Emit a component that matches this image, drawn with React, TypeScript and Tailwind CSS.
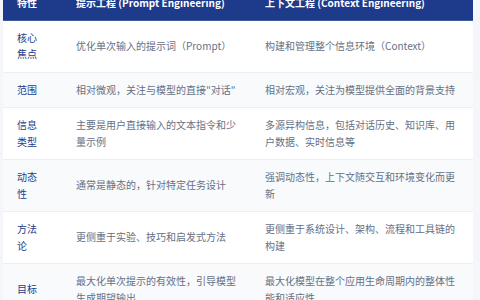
const rows: [string, string, string][] = [
  ["核心焦点", "优化单次输入的提示词（Prompt）", "构建和管理整个信息环境（Context）"],
  ["范围", "相对微观，关注与模型的直接\"对话\"", "相对宏观，关注为模型提供全面的背景支持"],
  ["信息类型", "主要是用户直接输入的文本指令和少量示例", "多源异构信息，包括对话历史、知识库、用户数据、实时信息等"],
  ["动态性", "通常是静态的，针对特定任务设计", "强调动态性，上下文随交互和环境变化而更新"],
  ["方法论", "更侧重于实验、技巧和启发式方法", "更侧重于系统设计、架构、流程和工具链的构建"],
  ["目标", "最大化单次提示的有效性，引导模型生成期望输出", "最大化模型在整个应用生命周期内的整体性能和适应性"],
];

export default function App() {
  return (
    <div
      className="h-[300px] w-[480px] overflow-hidden bg-[#f4f6f9] pl-[3px]"
      style={{ fontFamily: '"Noto Sans CJK SC", "Noto Sans", sans-serif' }}
    >
      <div className="-mt-[13px] w-[470px] text-[10px] leading-[16.5px]">
        <div className="grid grid-cols-[59px_189px_1fr] border-b border-[#3d5a9e] bg-[#1e3a8a] font-bold text-white">
          <div className="pl-[14px] pr-[8px] py-[8px]">特性</div>
          <div className="px-[14px] py-[8px]">提示工程 (Prompt Engineering)</div>
          <div className="px-[14px] py-[8px]">上下文工程 (Context Engineering)</div>
        </div>
        {rows.map(([k, a, b], i) => (
          <div
            key={k}
            className={
              "grid grid-cols-[59px_189px_1fr] items-center border-b border-[#eceff4] " +
              (i % 2 === 0 ? "bg-white" : "bg-[#f8fafc]")
            }
          >
            <div className="pl-[14px] pr-[17px] py-[9px] text-[#1e3a8a]">{k}</div>
            <div className="px-[14px] py-[9px] text-[#667085]">{a}</div>
            <div className="px-[14px] py-[9px] text-[#667085]">{b}</div>
          </div>
        ))}
      </div>
    </div>
  );
}
